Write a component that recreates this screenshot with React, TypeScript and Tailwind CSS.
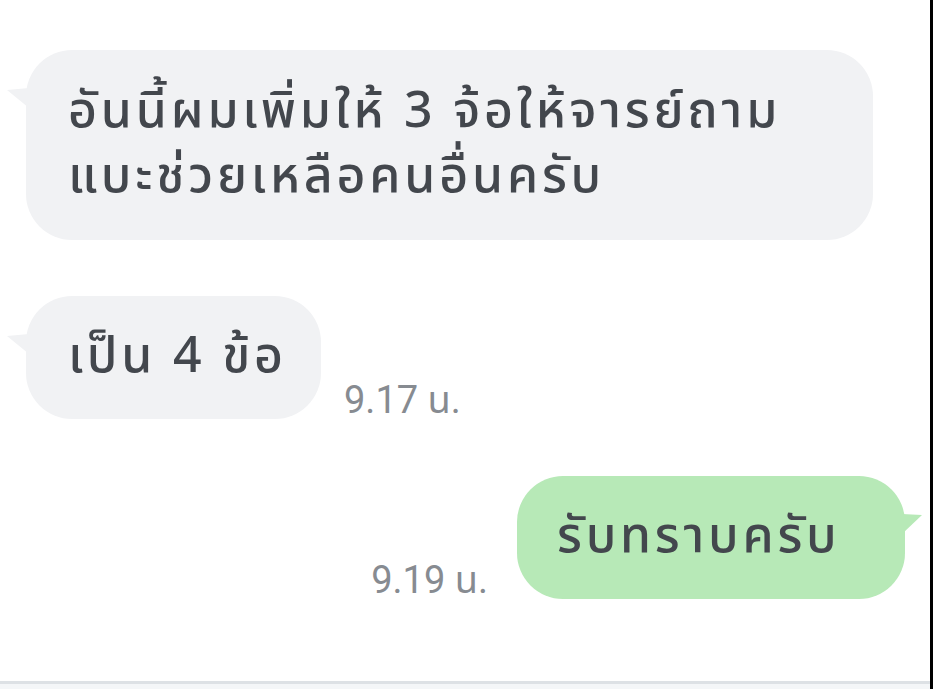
import React from 'react';

function LeftTail() {
  return (
    <svg className="absolute -left-[19px] top-[38px]" width="22" height="22" viewBox="0 0 22 22">
      <path d="M0 2 L22 0 L22 20 Z" fill="#f1f2f4" />
    </svg>
  );
}

function Time({ children }: { children: React.ReactNode }) {
  return (
    <span className="text-[38px] leading-none tracking-normal font-normal text-[#878b91] font-['Roboto','Noto_Sans_Thai',sans-serif]">
      {children}
    </span>
  );
}

export default function App() {
  return (
    <div className="w-[933px] h-[689px] flex bg-white overflow-hidden font-['Noto_Sans_Thai','Noto_Sans',sans-serif]">
      <div className="flex-1 flex flex-col">
        <div className="flex-1 flex flex-col pl-[26px] pr-[25px] pt-[50px] text-[#43474d] text-[50px] leading-[65px] tracking-[3.8px] font-medium">
          {/* incoming message */}
          <div className="relative self-start w-[847px] rounded-[46px] bg-[#f1f2f4] pl-[42px] pr-6 py-[30px]">
            <LeftTail />
            <p>อันนี้ผมเพิ่มให้ 3 จ้อให้จารย์ถาม</p>
            <p>แบะช่วยเหลือคนอื่นครับ</p>
          </div>

          <div className="mt-[56px] flex items-end gap-[23px]">
            <div className="relative w-[295px] rounded-[46px] bg-[#f1f2f4] pl-[42px] py-[29px]">
              <LeftTail />
              <p className="whitespace-nowrap">เป็น 4 ข้อ</p>
            </div>
            <Time>9.17 น.</Time>
          </div>

          <div className="mt-[57px] flex items-end justify-end gap-[29px]">
            <Time>9.19 น.</Time>
            <div className="relative w-[388px] rounded-[46px] bg-[#b7e9b7] pl-[40px] py-[29px]">
              <svg className="absolute -right-[17px] top-[38px]" width="20" height="22" viewBox="0 0 20 22">
                <path d="M0 0 L20 1 L0 20 Z" fill="#b7e9b7" />
              </svg>
              <p className="whitespace-nowrap">รับทราบครับ</p>
            </div>
          </div>
        </div>
        <div className="h-[3px] bg-[#dde1e5]" />
        <div className="h-[5px] bg-[#f4f6f8]" />
      </div>
      <div className="w-[3px] bg-black" />
    </div>
  );
}
